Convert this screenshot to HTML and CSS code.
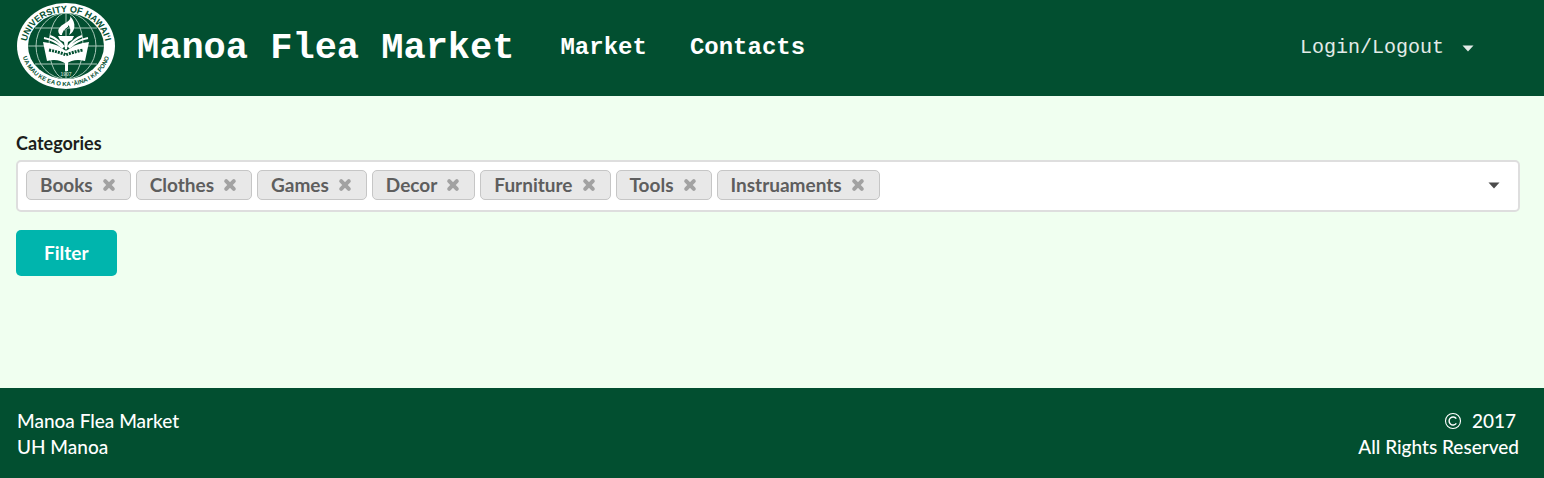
FILE: index.html
```
<!DOCTYPE html>
<html lang="en">
<head>
<meta charset="utf-8">
<title>Manoa Flea Market</title>
<link rel="stylesheet" href="styles.css">
</head>
<body>
<svg class="sprite" aria-hidden="true">
  <symbol id="cross" viewBox="0 0 14 14"><path d="M3.2 3.2 10.8 10.8M10.8 3.2 3.2 10.8" fill="none" stroke="currentColor" stroke-width="4" stroke-linecap="round"/></symbol>
  <symbol id="caret" viewBox="0 0 12 7"><path d="M.5.5h11L6 6.500z" fill="currentColor"/></symbol>
</svg>
<header class="header">
  <svg class="logo" viewBox="0 0 98 88" role="img" aria-label="University of Hawaii seal">
    <defs>
      <path id="arc-top" d="M9 46A40 36 0 0 1 89 46"/>
      <path id="arc-bottom" d="M4 44A45 40 0 0 0 94 44"/>
      <clipPath id="globe"><ellipse cx="49" cy="44" rx="38" ry="33"/></clipPath>
    </defs>
    <ellipse cx="49" cy="44" rx="49" ry="43" fill="#fff"/>
    <ellipse cx="49" cy="44" rx="38" ry="33" fill="#024f30"/>
    <g clip-path="url(#globe)" fill="none" stroke="#a9c8b9" stroke-width="1">
      <path d="M11 44h76M18 26h62M18 62h62M49 11v66"/>
      <ellipse cx="49" cy="44" rx="30" ry="33"/>
      <ellipse cx="49" cy="44" rx="17" ry="33"/>
    </g>
    <path d="M26 40Q39 41 49 49 59 41 72 40L68 59Q57 56 49 62 41 56 30 59z" fill="#fff"/>
    <path d="M27 36Q38 38 46 46M33 34Q41 37 47 45M71 36Q60 38 52 46M65 34Q57 37 51 45" fill="none" stroke="#fff" stroke-width="2"/>
    <path d="M41 34h16l-2 4-4 2-1 7h-2l-1-7-4-2zM48 60h3v9h-3z" fill="#fff"/>
    <path d="M43 33C38 27 45 23 50 20 53 18 54 16 53 14 60 21 58 30 52 33 55 27 52 24 51 23 52 28 45 28 45 33z" fill="#fff"/>
    <path d="M47 32C45 28 50 27 52 24" fill="none" stroke="#024f30" stroke-width="1"/>
    <path d="M32 48Q42 50 49 53 56 50 66 48" fill="none" stroke="#024f30" stroke-width="3" stroke-dasharray="2 1"/>
    <text class="seal-top"><textPath href="#arc-top" startOffset="50%">UNIVERSITY OF HAWAI‘I</textPath></text>
    <text class="seal-bottom"><textPath href="#arc-bottom" startOffset="50%">UA MAU KE EA O KA ‘ĀINA I KA PONO</textPath></text>
    <text class="seal-year" x="49" y="74">1907</text>
  </svg>
  <h1 class="title">Manoa Flea Market</h1>
  <nav class="nav">
    <a href="#market">Market</a>
    <a href="#contacts">Contacts</a>
  </nav>
  <button class="account" type="button" aria-haspopup="menu">Login/Logout <svg class="caret"><use href="#caret"/></svg></button>
</header>
<main class="main">
  <form class="form">
    <label class="label" for="categories">Categories</label>
    <div class="picker">
      <span class="tag">Books<button type="button" aria-label="Remove Books"><svg class="cross"><use href="#cross"/></svg></button></span>
      <span class="tag">Clothes<button type="button" aria-label="Remove Clothes"><svg class="cross"><use href="#cross"/></svg></button></span>
      <span class="tag">Games<button type="button" aria-label="Remove Games"><svg class="cross"><use href="#cross"/></svg></button></span>
      <span class="tag">Decor<button type="button" aria-label="Remove Decor"><svg class="cross"><use href="#cross"/></svg></button></span>
      <span class="tag">Furniture<button type="button" aria-label="Remove Furniture"><svg class="cross"><use href="#cross"/></svg></button></span>
      <span class="tag">Tools<button type="button" aria-label="Remove Tools"><svg class="cross"><use href="#cross"/></svg></button></span>
      <span class="tag">Instruaments<button type="button" aria-label="Remove Instruaments"><svg class="cross"><use href="#cross"/></svg></button></span>
      <input class="search" id="categories" type="text" autocomplete="off">
      <button class="toggle" type="button" aria-label="Show categories"><svg class="caret"><use href="#caret"/></svg></button>
    </div>
    <button class="filter" type="submit">Filter</button>
  </form>
</main>
<footer class="footer">
  <div>Manoa Flea Market<br>UH Manoa</div>
  <div class="rights">
    <div class="year"><svg class="copyright" viewBox="0 0 18 18" role="img" aria-label="Copyright"><g fill="none" stroke="currentColor"><circle cx="9" cy="9" r="7.500" stroke-width="1.100"/><path d="M12.300 6.600A4 4 0 1 0 12.300 11.400" stroke-width="1.400"/></g></svg>2017</div>
    All Rights Reserved
  </div>
</footer>
</body>
</html>
```
FILE: styles.css
```
* { box-sizing: border-box; }
body {
  margin: 0;
  min-height: 100vh;
  display: flex;
  flex-direction: column;
  background: #f0fff0;
  color: #1c1e1c;
  font: 19px/26px Lato, sans-serif;
}
button {
  border: 0;
  padding: 0;
  background: none;
  color: inherit;
  font: inherit;
  cursor: pointer;
}
.sprite { display: none; }
.header {
  display: flex;
  align-items: center;
  min-height: 96px;
  padding: 0 70px 0 17px;
  background: #024f30;
  color: #fff;
  font-family: "Liberation Mono", monospace;
}
.logo { width: 98px; height: 88px; margin-bottom: 4px; flex: none; }
.logo text {
  fill: #024f30;
  font-family: "Liberation Sans", sans-serif;
  font-weight: bold;
  text-anchor: middle;
}
.logo .seal-top { font-size: 9px; }
.logo .seal-bottom { font-size: 6px; }
.logo .seal-year { fill: #a9c8b9; font-size: 5px; }
.title {
  margin: 0 0 0 22px;
  font-size: 37px;
  line-height: 44px;
}
.nav {
  display: flex;
  gap: 43px;
  margin-left: 46px;
  font-size: 24px;
  font-weight: bold;
}
.nav a { color: inherit; text-decoration: none; }
.account {
  display: flex;
  align-items: center;
  gap: 18px;
  margin-left: auto;
  color: #e3ebe7;
  font-size: 20px;
}
.caret { width: 12px; height: 7px; display: block; }
.main { flex: 1; padding: 32px 24px 0 16px; }
.form {
  display: flex;
  flex-direction: column;
  align-items: flex-start;
}
.label {
  margin-bottom: 2px;
  font-size: 18px;
  font-weight: bold;
  line-height: 30px;
}
.picker {
  display: flex;
  align-items: center;
  gap: 5px;
  align-self: stretch;
  min-height: 52px;
  padding: 0 18px 2px 8px;
  border: 2px solid #dedede;
  border-radius: 5px;
  background: #fff;
}
.tag {
  display: flex;
  align-items: center;
  gap: 9px;
  height: 30px;
  padding: 0 14px 0 13px;
  border: 1px solid #c6c6c6;
  border-radius: 5px;
  background: #e8e8e8;
  color: #5e5e5e;
  font-weight: bold;
}
.tag button { color: #a2a2a2; }
.cross { display: block; width: 14px; height: 14px; }
.search {
  flex: 1;
  min-width: 0;
  border: 0;
  outline: 0;
  background: none;
  font: inherit;
}
.toggle { color: #4b4b4b; }
.filter {
  margin-top: 18px;
  padding: 10px 28px;
  border-radius: 5px;
  background: #00b5ad;
  color: #fff;
  font-weight: bold;
}
.footer {
  display: flex;
  justify-content: space-between;
  min-height: 90px;
  padding: 20px 25px 18px 17px;
  background: #024f30;
  color: #fff;
  font-weight: 500;
}
.rights { text-align: right; }
.year {
  display: flex;
  justify-content: flex-end;
  align-items: center;
  gap: 10px;
  padding-right: 3px;
}
.copyright { width: 18px; height: 18px; }
```
